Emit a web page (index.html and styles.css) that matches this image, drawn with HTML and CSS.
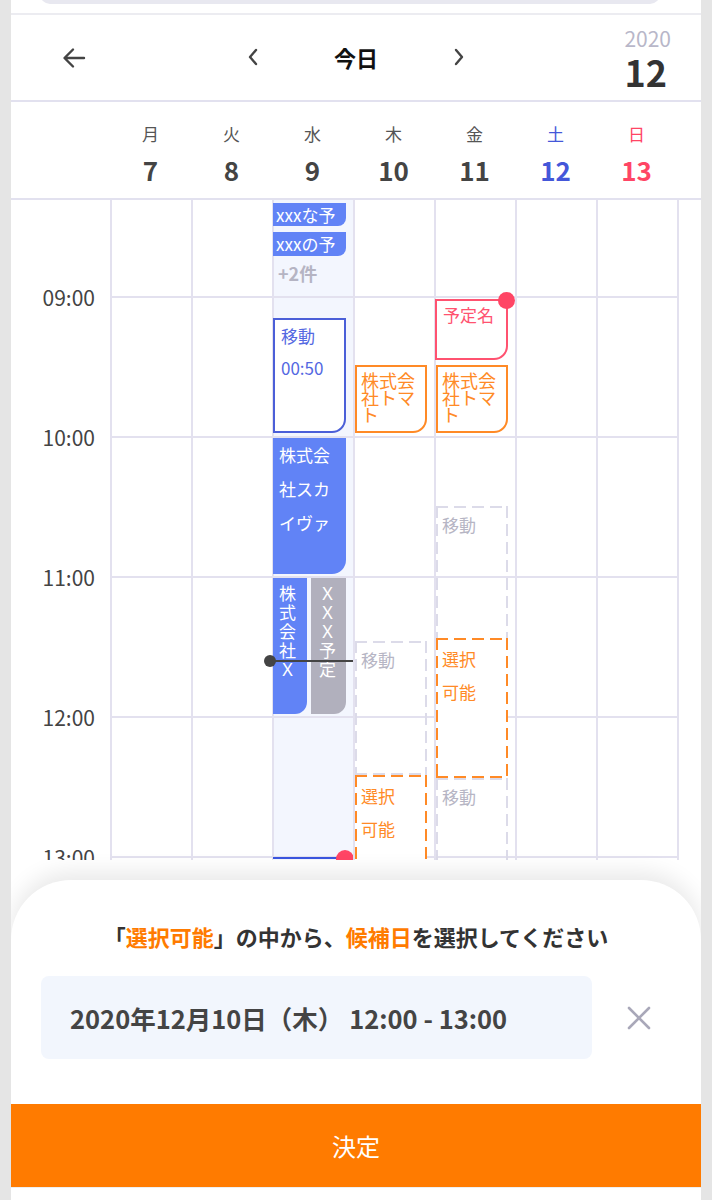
FILE: index.html
```html
<!DOCTYPE html>
<html lang="ja">
<head>
  <meta charset="UTF-8" />
  <meta name="viewport" content="width=device-width, initial-scale=1.0"/>
  <title>候補日の選択</title>
  <link rel="stylesheet" href="styles.css">
</head>
<body>
  <div class="app">
    <div class="topbar"><div class="search-edge"></div></div>

    <header class="nav">
      <button class="icon-btn back" aria-label="戻る">
        <svg width="26" height="26" viewBox="0 0 26 26"><path d="M23 13H4M12 4.5L3.5 13l8.5 8.5" /></svg>
      </button>
      <div class="week-switch">
        <button class="icon-btn" aria-label="前の週">
          <svg width="14" height="20" viewBox="0 0 14 20"><path d="M10 3L4 10l6 7" /></svg>
        </button>
        <span class="today">今日</span>
        <button class="icon-btn" aria-label="次の週">
          <svg width="14" height="20" viewBox="0 0 14 20"><path d="M4 3l6 7-6 7" /></svg>
        </button>
      </div>
      <div class="month">
        <div class="year">2020</div>
        <div class="month-num">12</div>
      </div>
    </header>

    <div class="days">
      <div class="day-head"><span>月</span><b>7</b></div>
      <div class="day-head"><span>火</span><b>8</b></div>
      <div class="day-head"><span>水</span><b>9</b></div>
      <div class="day-head"><span>木</span><b>10</b></div>
      <div class="day-head"><span>金</span><b>11</b></div>
      <div class="day-head sat"><span>土</span><b>12</b></div>
      <div class="day-head sun"><span>日</span><b>13</b></div>
    </div>

    <div class="grid">
      <div class="times">
        <div class="time">09:00</div>
        <div class="time">10:00</div>
        <div class="time">11:00</div>
        <div class="time">12:00</div>
        <div class="time">13:00</div>
      </div>

      <div class="day"></div>
      <div class="day"></div>

      <div class="day is-today">
        <div class="ev fill small" style="top:3px;height:23px">xxxな予</div>
        <div class="ev fill small" style="top:32px;height:24px">xxxの予</div>
        <div class="more" style="top:61px">+2件</div>
        <div class="ev outline-blue" style="top:118px;height:115px">移動<br>00:50</div>
        <div class="ev fill" style="top:238px;height:136px">株式会社スカイヴァ</div>
        <div class="ev fill narrow" style="top:378px;height:136px">株式会社Ｘ</div>
        <div class="ev gray narrow second" style="top:378px;height:136px">ＸＸＸ予定</div>
        <div class="now" style="top:460px"></div>
        <div class="ev fill next" style="top:657px;height:60px"></div>
      </div>

      <div class="day">
        <div class="ev outline-orange" style="top:165px;height:68px">株式会社トマト</div>
        <div class="ev dashed" style="top:441px;height:134px">移動</div>
        <div class="ev dashed pick" style="top:575px;height:260px">選択<br>可能</div>
      </div>

      <div class="day">
        <div class="ev outline-red" style="top:99px;height:61px">予定名</div>
        <div class="ev outline-orange" style="top:165px;height:68px">株式会社トマト</div>
        <div class="ev dashed" style="top:306px;height:260px">移動</div>
        <div class="ev dashed pick" style="top:438px;height:140px">選択<br>可能</div>
        <div class="ev dashed" style="top:578px;height:300px">移動</div>
      </div>

      <div class="day"></div>
      <div class="day"></div>
    </div>

    <section class="sheet">
      <p class="hint">「<em>選択可能</em>」の中から、<em>候補日</em>を選択してください</p>
      <div class="picked">
        <div class="picked-box">2020年12月10日（木） 12:00 - 13:00</div>
        <button class="icon-btn clear" aria-label="クリア">
          <svg width="24" height="24" viewBox="0 0 24 24"><path d="M2 2l20 20M22 2L2 22" /></svg>
        </button>
      </div>
      <button class="submit">決定</button>
    </section>
  </div>
</body>
</html>
```

FILE: styles.css
```css
body {
  margin: 0;
  background: #e5e5e5;
  font-family: 'Noto Sans CJK JP', 'Noto Sans', sans-serif;
  color: #444;
}
.app {
  position: relative;
  width: 690px;
  height: 1200px;
  margin-left: 11px;
  background: #fff;
  overflow: hidden;
}
button {
  font-family: inherit;
}
.icon-btn {
  border: none;
  background: none;
  padding: 0;
  display: flex;
  align-items: center;
  cursor: pointer;
}
.icon-btn svg path {
  fill: none;
  stroke: #444;
  stroke-width: 2.4;
  stroke-linecap: round;
  stroke-linejoin: round;
}

/* top */
.topbar {
  display: flow-root;
  height: 13px;
  border-bottom: 2px solid #ececf1;
}
.search-edge {
  height: 20px;
  margin: -16px 41px 0 29px;
  border-radius: 20px;
  background: #e8e8f0;
}
.nav {
  display: grid;
  grid-template-columns: 1fr auto 1fr;
  align-items: center;
  height: 85px;
  border-bottom: 2px solid #e2e1ef;
}
.back {
  margin-left: 50px;
}
.week-switch {
  display: flex;
  align-items: center;
  gap: 74px;
  margin-top: -2px;
}
.today {
  font-size: 22px;
  font-weight: 700;
  color: #111;
}
.month {
  justify-self: end;
  margin-right: 30px;
  text-align: right;
}
.year {
  font-size: 21px;
  line-height: 24px;
  color: #b8b7c9;
}
.month-num {
  font-size: 36px;
  font-weight: 700;
  line-height: 36px;
  margin-top: 3px;
  color: #333;
  margin-right: 4px;
}

/* week header */
.days {
  display: grid;
  grid-template-columns: repeat(7, 81px);
  padding-left: 99px;
  height: 96px;
  border-bottom: 2px solid #e2e1ef;
}
.day-head {
  display: flex;
  flex-direction: column;
  align-items: center;
  padding-top: 20px;
}
.day-head span {
  font-size: 17px;
  line-height: 24px;
  color: #555;
}
.day-head b {
  font-size: 26px;
  line-height: 40px;
  margin-top: 4px;
  color: #444;
}
.day-head.sat span, .day-head.sat b { color: #4457d9; }
.day-head.sun span, .day-head.sun b { color: #ff4565; }

/* time grid */
.grid {
  display: grid;
  grid-template-columns: 99px repeat(7, 81px);
  height: 660px;
  overflow: hidden;
}
.times {
  padding-top: 85px;
}
.time {
  height: 140px;
  line-height: 24px;
  font-size: 21px;
  text-align: right;
  padding-right: 15px;
  color: #444;
}
.day {
  position: relative;
  box-sizing: border-box;
  border-left: 2px solid #e3e1ef;
  background-image: linear-gradient(#e3e1ef 2px, transparent 2px);
  background-size: 100% 140px;
  background-position: 0 96px;
}
.day:last-child {
  border-right: 2px solid #e3e1ef;
  width: 83px;
}
.day.is-today {
  background-color: #f3f6fe;
}

/* events */
.ev {
  position: absolute;
  left: -1px;
  width: 73px;
  box-sizing: border-box;
  padding: 0 6px;
  font-size: 17px;
  line-height: 34px;
  border-radius: 0 0 14px 0;
  overflow: hidden;
}
.fill {
  background: #6183f6;
  color: #fff;
}
.fill.small {
  line-height: 23px;
  padding: 0 3px;
  border-radius: 0 0 8px 0;
  white-space: nowrap;
  font-size: 17px;
}
.narrow {
  width: 34px;
  padding: 5px 0 0 6px;
  line-height: 19px;
  word-break: break-all;
  border-radius: 0 0 12px 0;
}
.gray {
  background: #b1b0bd;
  color: #fff;
}
.narrow.second {
  left: 37px;
  width: 35px;
  padding-left: 8px;
}
.more {
  position: absolute;
  left: 4px;
  font-size: 18px;
  font-weight: 700;
  line-height: 24px;
  color: #b5b4c3;
}
.outline-blue {
  border: 2px solid #4b5fd8;
  background: #fff;
  color: #5468e2;
  line-height: 32px;
}
.outline-red {
  border: 2px solid #ff5270;
  background: #fff;
  color: #ff5270;
  line-height: 28px;
  overflow: visible;
}
.outline-red::after {
  content: "";
  position: absolute;
  right: -9px;
  top: -9px;
  width: 17px;
  height: 17px;
  border-radius: 50%;
  background: #ff4565;
}
.outline-orange {
  border: 2px solid #ff8a26;
  background: #fff;
  color: #ff8a26;
  font-size: 18px;
  line-height: 17px;
  padding: 5px 4px;
  width: 72px;
  left: 0;
}
.dashed {
  --dash: #dcdbe9;
  width: 72px;
  left: 0;
  color: #b6b5c4;
  border-radius: 0;
  background:
    repeating-linear-gradient(90deg, var(--dash) 0 12px, transparent 12px 18px) left top / 100% 2px no-repeat,
    repeating-linear-gradient(90deg, var(--dash) 0 12px, transparent 12px 18px) left bottom / 100% 2px no-repeat,
    repeating-linear-gradient(180deg, var(--dash) 0 12px, transparent 12px 18px) left top / 2px 100% no-repeat,
    repeating-linear-gradient(180deg, var(--dash) 0 12px, transparent 12px 18px) right top / 2px 100% no-repeat;
  padding-top: 2px;
}
.dashed.pick {
  --dash: #ff8a26;
  color: #ff8a26;
  background-color: #fff;
  line-height: 33px;
  padding-top: 4px;
}
.next {
  border-top: 2px solid #3a55e0;
  overflow: visible;
  background: #f3f6fe;
}
.next::after {
  content: "";
  position: absolute;
  right: -8px;
  top: -9px;
  width: 18px;
  height: 18px;
  border-radius: 50%;
  background: #ff4565;
}
.now {
  position: absolute;
  left: -4px;
  width: 83px;
  height: 2px;
  background: #444;
  z-index: 2;
}
.now::before {
  content: "";
  position: absolute;
  left: -6px;
  top: -5px;
  width: 12px;
  height: 12px;
  border-radius: 50%;
  background: #444;
}

/* bottom sheet */
.sheet {
  position: absolute;
  left: 0;
  right: 0;
  top: 880px;
  bottom: 0;
  background: #fff;
  border-radius: 60px 60px 0 0;
  box-shadow: 0 -8px 22px rgba(0, 0, 0, 0.09);
  z-index: 5;
}
.hint {
  margin: 44px 0 28px;
  text-align: center;
  font-size: 22px;
  line-height: 24px;
  font-weight: 700;
  color: #333;
}
.hint em {
  font-style: normal;
  color: #ff7b00;
}
.picked {
  display: flex;
  align-items: center;
  padding-left: 30px;
}
.picked-box {
  width: 551px;
  height: 83px;
  box-sizing: border-box;
  padding-left: 29px;
  border-radius: 8px;
  background: #f2f6fd;
  font-size: 25.5px;
  font-weight: 700;
  line-height: 83px;
  color: #444;
}
.clear {
  margin-left: 35px;
}
.clear svg path {
  stroke: #a9a8b9;
  stroke-width: 2.6;
}
.submit {
  display: block;
  width: 100%;
  height: 84px;
  margin-top: 45px;
  border: none;
  border-bottom: 1px solid #eee;
  background: #ff7b00;
  color: #fff;
  font-size: 24px;
  cursor: pointer;
}
```
